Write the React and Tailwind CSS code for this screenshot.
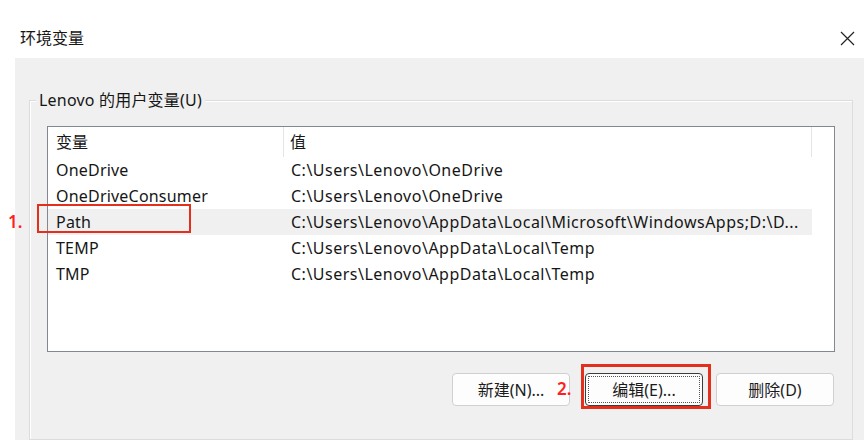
import React from 'react';

const rows = [
  { name: 'OneDrive', value: 'C:\\Users\\Lenovo\\OneDrive' },
  { name: 'OneDriveConsumer', value: 'C:\\Users\\Lenovo\\OneDrive' },
  { name: 'Path', value: 'C:\\Users\\Lenovo\\AppData\\Local\\Microsoft\\WindowsApps;D:\\D...', selected: true },
  { name: 'TEMP', value: 'C:\\Users\\Lenovo\\AppData\\Local\\Temp' },
  { name: 'TMP', value: 'C:\\Users\\Lenovo\\AppData\\Local\\Temp' },
];

const font = { fontFamily: '"Noto Sans", "Noto Sans CJK SC", sans-serif' };

const Button = ({ children, focused }) => (
  <button
    className={
      'w-[118px] h-[33px] rounded-[4px] bg-[#fdfdfd] text-[16px] text-[#1b1b1b] flex items-center justify-center ' +
      (focused ? 'border border-[#3c3c3c] outline outline-1 outline-dotted outline-[#555] -outline-offset-[4px]' : 'border border-[#d0d0d0]')
    }
  >
    {children}
  </button>
);

const App = () => {
  return (
    <div className="w-[864px] h-[440px] bg-white flex flex-col overflow-hidden text-[#161616]" style={font}>
      <div className="h-[58px] shrink-0 flex items-center justify-between pl-[20px] pr-[9px] pt-[18px]">
        <span className="text-[16px]">环境变量</span>
        <svg width="15" height="15" viewBox="0 0 15 15">
          <path d="M1 1 L14 14 M14 1 L1 14" stroke="#222" strokeWidth="1.2" fill="none" />
        </svg>
      </div>

      <div className="flex-1 ml-[15px] bg-[#f0f0f0] pt-[42px] pl-[14px] pr-[11px] relative">
        <div className="relative border border-[#dcdcdc] shadow-[inset_1px_1px_0_#fff] h-[340px] pt-[25px] pl-[17px] pr-[17px]">
          <span className="absolute left-[6px] -top-[12px] bg-[#f0f0f0] px-[3px] text-[16px] leading-[22px] tracking-[0.2px]">
            Lenovo 的用户变量(U)
          </span>

          <div className="h-[226px] bg-white border border-[#828790] relative">
            <div className="flex h-[30px] w-[764px] text-[16px]">
              <div className="w-[236px] pl-[8px] flex items-center border-r border-[#e5e5e5]">变量</div>
              <div className="flex-1 pl-[6px] flex items-center border-r border-[#e5e5e5]">值</div>
            </div>
            {rows.map((r) => (
              <div
                key={r.name}
                className={'flex h-[26px] w-[764px] items-center text-[16px] ' + (r.selected ? 'bg-[#f0f0f0]' : '')}
              >
                <div className="w-[236px] pl-[8px] whitespace-nowrap tracking-[0.2px]">{r.name}</div>
                <div className="flex-1 pl-[7px] whitespace-nowrap tracking-[0.5px]">{r.value}</div>
              </div>
            ))}
          </div>

          <div className="flex justify-end gap-[13px] mt-[21px] pr-[1px]">
            <div className="w-[120px]">
              <Button>新建(N)...</Button>
            </div>
            <div className="relative">
              <span className="absolute -left-[28px] top-[3px] text-[#ff1f1f] text-[17px] font-semibold">2.</span>
              <div className="absolute -left-[4px] -top-[9px] w-[130px] h-[45px] border-[3px] border-[#e2301c]"></div>
              <Button focused>编辑(E)...</Button>
            </div>
            <Button>删除(D)</Button>
          </div>
        </div>
      </div>

      <span className="absolute left-[8px] top-[209px] text-[#ff1f1f] text-[17px] font-semibold" style={font}>1.</span>
      <div className="absolute left-[37px] top-[204px] w-[154px] h-[29px] border-2 border-[#e2301c]"></div>
    </div>
  );
};

export default App;
